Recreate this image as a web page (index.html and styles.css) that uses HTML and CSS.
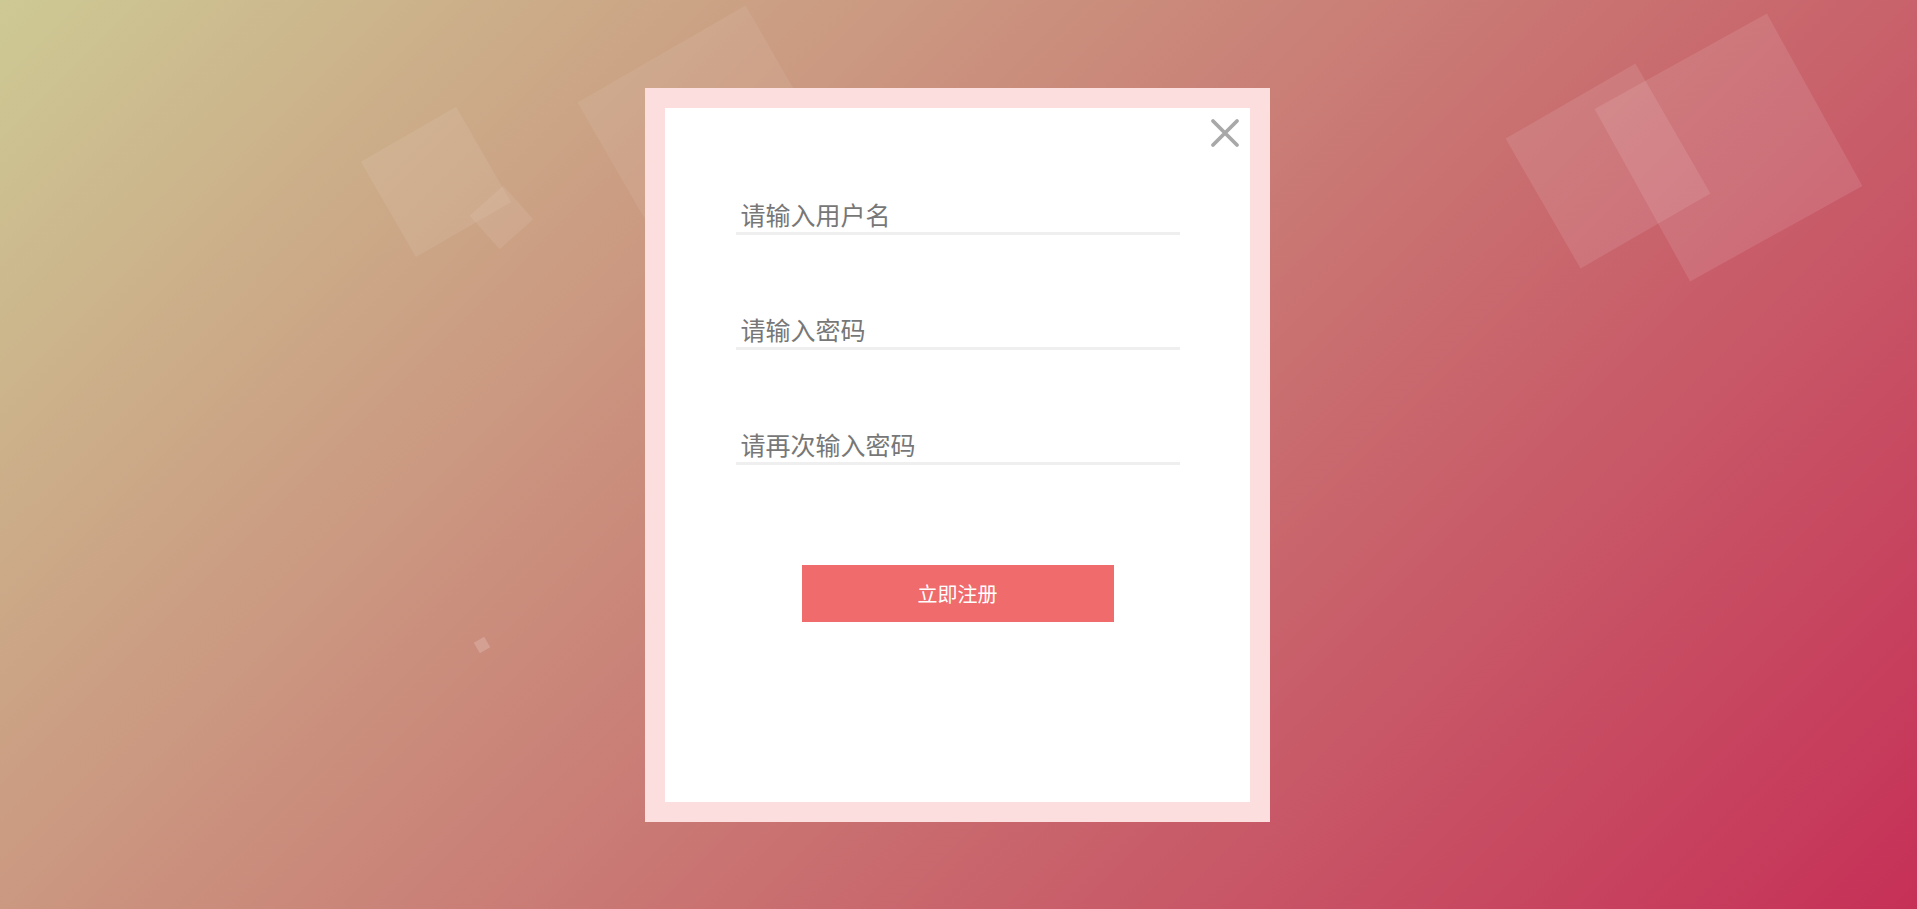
FILE: index.html
```html
<!DOCTYPE html>
<html lang="zh-CN">
<head>
<meta charset="utf-8">
<title>注册</title>
<link rel="stylesheet" href="styles.css">
</head>
<body>
<div class="scene">
  <ul class="shapes">
    <li class="sq sq1"></li>
    <li class="sq sq2"></li>
    <li class="sq sq3"></li>
    <li class="sq sq4"></li>
    <li class="sq sq5"></li>
    <li class="sq sq6"></li>
  </ul>
  <div class="modal">
    <button class="close" type="button" aria-label="关闭">
      <svg width="30" height="30" viewBox="0 0 30 30">
        <path d="M3 3 L27 27 M27 3 L3 27" stroke="#a8a8a8" stroke-width="3.8" stroke-linecap="round" fill="none"/>
      </svg>
    </button>
    <form class="form">
      <div class="field"><input type="text" placeholder="请输入用户名"></div>
      <div class="field"><input type="password" placeholder="请输入密码"></div>
      <div class="field"><input type="password" placeholder="请再次输入密码"></div>
      <button class="submit" type="button">立即注册</button>
    </form>
  </div>
</div>
</body>
</html>
```

FILE: styles.css
```css
html, body {
  margin: 0;
  padding: 0;
  height: 100%;
}

body {
  font-family: "Noto Sans CJK SC", "Noto Sans", sans-serif;
  overflow: hidden;
}

.scene {
  position: relative;
  height: 100vh;
  display: flex;
  align-items: center;
  justify-content: center;
  background: linear-gradient(135deg, #cdc994 0%, #c63057 100%);
  overflow: hidden;
}

.shapes {
  list-style: none;
  margin: 0;
  padding: 0;
}

.sq {
  position: absolute;
  background: rgba(255, 255, 255, 0.1);
}

.sq1 { width: 110px; height: 110px; left: 381px; top: 127px; transform: rotate(-30deg); background: rgba(255, 255, 255, 0.08); }
.sq2 { width: 45px; height: 45px; left: 479px; top: 195px; transform: rotate(-42deg); background: rgba(255, 255, 255, 0.08); }
.sq3 { width: 194px; height: 194px; left: 613px; top: 41px; transform: rotate(-30deg); background: rgba(255, 255, 255, 0.07); }
.sq4 { width: 150px; height: 150px; left: 1533px; top: 91px; transform: rotate(-30deg); }
.sq5 { width: 197px; height: 197px; left: 1630px; top: 49px; transform: rotate(-29deg); }
.sq6 { width: 12px; height: 12px; left: 476px; top: 639px; transform: rotate(-30deg); background: rgba(255, 255, 255, 0.18); }

.modal {
  position: relative;
  z-index: 1;
  width: 585px;
  height: 694px;
  background: #fff;
  border: 20px solid #fcdede;
  margin-right: 2px;
}

.close {
  position: absolute;
  top: 10px;
  right: 10px;
  width: 30px;
  height: 30px;
  padding: 0;
  border: 0;
  background: none;
  cursor: pointer;
}

.close svg {
  display: block;
}

.form {
  display: flex;
  flex-direction: column;
  align-items: center;
  padding-top: 87px;
  margin: 0;
}

.field {
  width: 444px;
  border-bottom: 3px solid #efefef;
  margin-bottom: 75px;
}

.field:nth-of-type(3) {
  margin-bottom: 100px;
}

.field input {
  display: block;
  width: 100%;
  box-sizing: border-box;
  height: 37px;
  line-height: 35px;
  padding: 2px 5px 0;
  border: 0;
  outline: none;
  background: transparent;
  font-family: "Noto Sans CJK SC", "Noto Sans", sans-serif;
  font-size: 25px;
  color: #555;
}

.field input::placeholder {
  color: #777;
}

.submit {
  width: 312px;
  height: 57px;
  border: 0;
  background: #f06b6c;
  color: #fff;
  font-family: "Noto Sans CJK SC", "Noto Sans", sans-serif;
  font-size: 20px;
  cursor: pointer;
  padding: 0;
}
```
